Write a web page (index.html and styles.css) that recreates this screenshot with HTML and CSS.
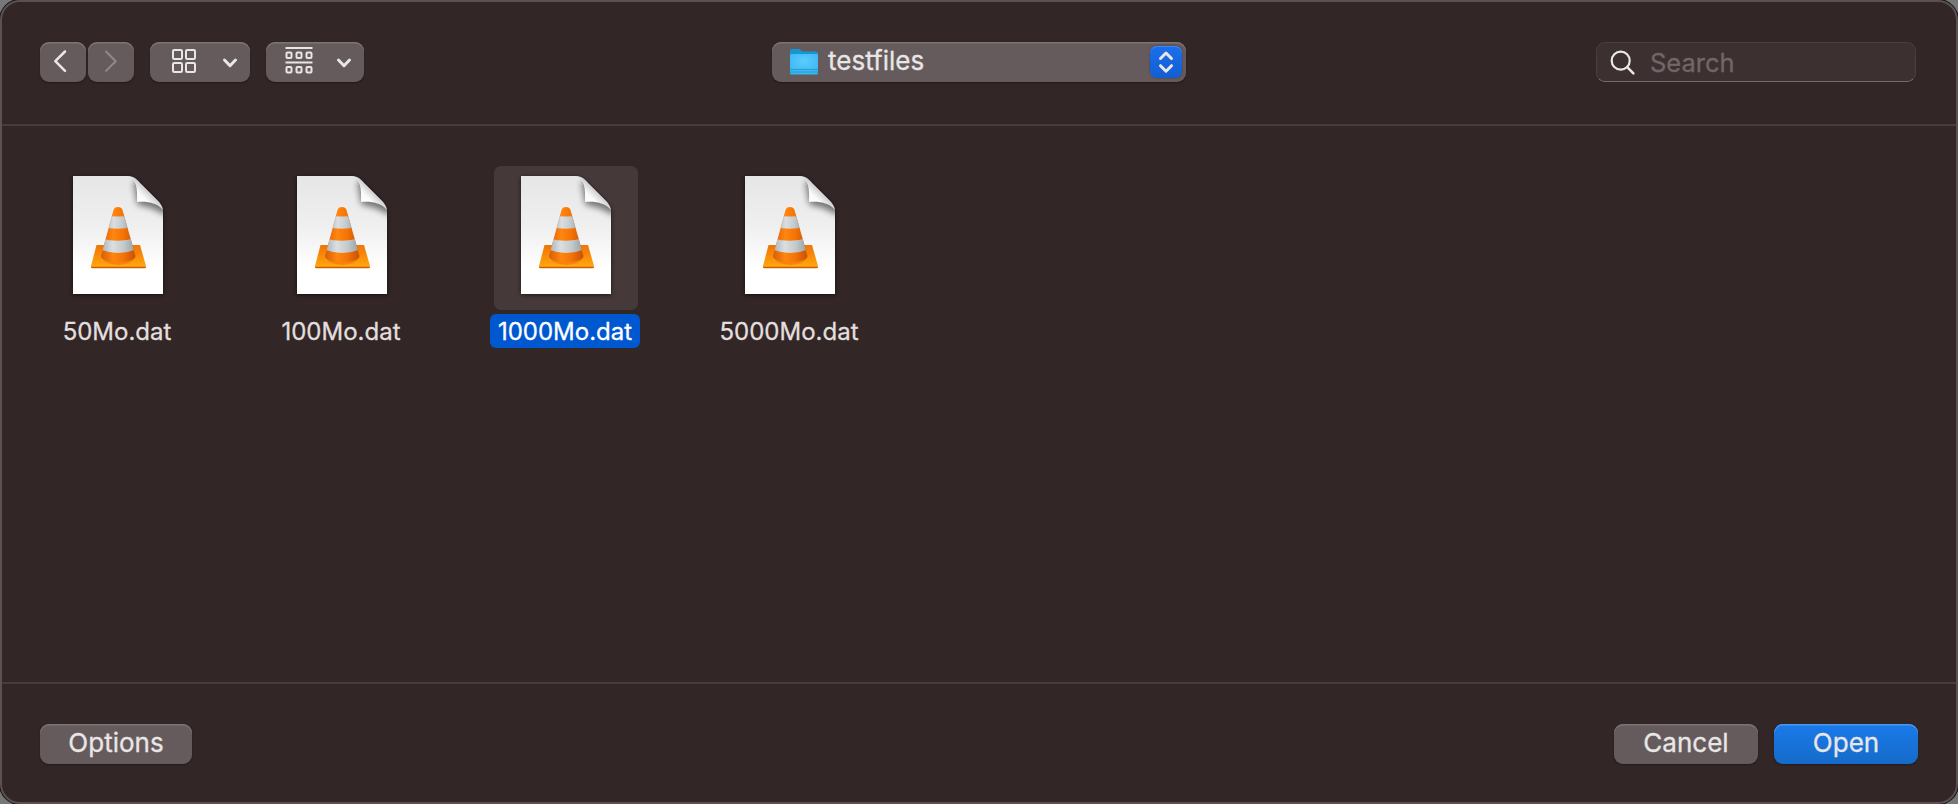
FILE: index.html
```html
<!DOCTYPE html>
<html lang="en">
<head>
<meta charset="utf-8">
<title>Open</title>
<link rel="stylesheet" href="styles.css">
</head>
<body>
<svg class="defs" width="0" height="0" aria-hidden="true">
  <defs>
    <linearGradient id="paper" x1="0" y1="0" x2="0" y2="1">
      <stop offset="0" stop-color="#e6e6e6"/><stop offset=".45" stop-color="#f0f0f0"/><stop offset=".78" stop-color="#fff"/>
    </linearGradient>
    <linearGradient id="curl" gradientUnits="userSpaceOnUse" x1="64" y1="26" x2="75" y2="15">
      <stop offset="0" stop-color="#fff"/><stop offset=".5" stop-color="#fafafa"/><stop offset="1" stop-color="#cfcfcf"/>
    </linearGradient>
    <linearGradient id="orange" x1="0" y1="0" x2="1" y2="0">
      <stop offset="0" stop-color="#d05808"/><stop offset=".38" stop-color="#ff860f"/><stop offset=".65" stop-color="#f47206"/><stop offset="1" stop-color="#c24b06"/>
    </linearGradient>
    <linearGradient id="white" x1="0" y1="0" x2="1" y2="0">
      <stop offset="0" stop-color="#a3a7aa"/><stop offset=".36" stop-color="#dadee1"/><stop offset=".65" stop-color="#c4c9cc"/><stop offset="1" stop-color="#929699"/>
    </linearGradient>
    <linearGradient id="base" x1="0" y1="0" x2="0" y2="1">
      <stop offset="0" stop-color="#f07406"/><stop offset=".6" stop-color="#fc920a"/><stop offset="1" stop-color="#ffae10"/>
    </linearGradient>
    <filter id="soft" x="-40%" y="-40%" width="180%" height="180%"><feGaussianBlur stdDeviation="3"/></filter>
    <clipPath id="sheet"><path d="M0 0H55C61 0 65 4 68 8L86 26Q90 30 90 36V118H0Z"/></clipPath>
    <clipPath id="cone"><path d="M40.500 34Q41.500 31 45 31Q48.500 31 49.500 34L62.500 80C62.500 88 28 88 28 80Z"/></clipPath>
    <symbol id="document" viewBox="0 0 90 118">
      <path d="M0 0H55C61 0 65 4 68 8L86 26Q90 30 90 36V118H0Z" fill="url(#paper)"/>
      <g clip-path="url(#sheet)">
        <path d="M60 8C63 14 62 22 65 29C73 30 83 33 93 40L96 20L70 0Z" fill="#000" opacity=".5" filter="url(#soft)"/>
      </g>
      <path d="M55 0C64 3 64.500 14 64 25.800C75 25 85 27 90 34Q89 30 86 26L68 8Q61 1 55 0Z" fill="url(#curl)"/>
      <path d="M23.500 69H67L73 90Q73 92 71.500 92H19.500Q18 92 18 90Z" fill="url(#base)"/>
      <path d="M18 90.700H73V91Q73 92.300 71.500 92.300H19.500Q18 92.300 18 91Z" fill="#d05a04"/>
      <path d="M30 82C31 91 60 91 61 82Z" fill="#f27b08" opacity=".75"/>
      <g clip-path="url(#cone)">
        <path d="M26 28H64V90H26Z" fill="url(#orange)"/>
        <path d="M30 39.500Q45 41.500 60 39.500V51Q45 54.500 30 51Z" fill="url(#white)"/>
        <path d="M26 61.500Q45 68 64 61.500V73Q45 81 26 73Z" fill="url(#white)"/>
      </g>
    </symbol>
    <symbol id="chevron-down" viewBox="0 0 16 12">
      <path d="M2.500 3L8 8.700L13.500 3" class="stroke bold"/>
    </symbol>
  </defs>
</svg>

<main class="dialog">
  <header class="toolbar">
    <div class="tools">
      <div class="history">
        <button class="btn nav" aria-label="Back"><svg width="46" height="40"><path d="M25 9.500L15.300 19.200L25 28.900" class="stroke"/></svg></button>
        <button class="btn nav disabled" aria-label="Forward"><svg width="46" height="40"><path d="M18 9.500L27.700 19.200L18 28.900" class="stroke"/></svg></button>
      </div>
      <button class="btn view" aria-label="Icon view">
        <svg width="24" height="24" class="thin"><rect x="1" y="1" width="9" height="9" rx="1.200"/><rect x="14" y="1" width="9" height="9" rx="1.200"/><rect x="1" y="14" width="9" height="9" rx="1.200"/><rect x="14" y="14" width="9" height="9" rx="1.200"/></svg>
        <svg class="chev" width="16" height="12"><use href="#chevron-down"/></svg>
      </button>
      <button class="btn group" aria-label="Group by">
        <svg width="28" height="28" class="thin"><path d="M.5 2H27.500M.5 16.500H27.500"/><rect x="1.500" y="6.500" width="5" height="5.500" rx="1"/><rect x="11.500" y="6.500" width="5" height="5.500" rx="1"/><rect x="21.500" y="6.500" width="5" height="5.500" rx="1"/><rect x="1.500" y="21" width="5" height="5.500" rx="1"/><rect x="11.500" y="21" width="5" height="5.500" rx="1"/><rect x="21.500" y="21" width="5" height="5.500" rx="1"/></svg>
        <svg class="chev" width="16" height="12"><use href="#chevron-down"/></svg>
      </button>
    </div>

    <button class="btn location">
      <svg class="folder" width="30" height="28">
        <defs><radialGradient id="folderFront" cy=".35" r=".7"><stop offset="0" stop-color="#5dccff"/><stop offset="1" stop-color="#39b5ef"/></radialGradient></defs>
        <path d="M1 3Q1 1 3 1H9.500Q11 1 12 2.200Q13 3.500 14.500 3.500H27Q29 3.500 29 5.500V25H1Z" fill="#1597d5"/>
        <path d="M1 7Q1 6 2 6H28Q29 6 29 7V25Q29 26.500 27.500 26.500H2.500Q1 26.500 1 25Z" fill="url(#folderFront)"/>
        <path d="M1 21.500H29M1 24H29" stroke="#219bd6" stroke-width="1"/>
      </svg>
      <span class="location-name">testfiles</span>
      <span class="stepper"><svg width="32" height="32"><path d="M10.500 12.500L16 7L21.500 12.500M10.500 19.700L16 25.200L21.500 19.700" class="stroke bold"/></svg></span>
    </button>

    <label class="search">
      <svg width="26" height="26"><circle cx="10.700" cy="10.700" r="9" class="stroke fine"/><path d="M17.200 17.200L23.400 23.300" class="stroke"/></svg>
      <span class="placeholder">Search</span>
    </label>
  </header>

  <section class="files">
    <div class="file"><div class="thumb"><svg class="doc"><use href="#document"/></svg></div><span class="name">50Mo.dat</span></div>
    <div class="file"><div class="thumb"><svg class="doc"><use href="#document"/></svg></div><span class="name">100Mo.dat</span></div>
    <div class="file selected"><div class="thumb"><svg class="doc"><use href="#document"/></svg></div><span class="name">1000Mo.dat</span></div>
    <div class="file"><div class="thumb"><svg class="doc"><use href="#document"/></svg></div><span class="name">5000Mo.dat</span></div>
  </section>

  <footer class="footer">
    <button class="btn options">Options</button>
    <div class="actions">
      <button class="btn action">Cancel</button>
      <button class="btn action primary">Open</button>
    </div>
  </footer>
</main>
</body>
</html>
```
FILE: styles.css
```css
* { box-sizing: border-box; }
body {
  margin: 0;
  background: #777;
  font-family: Inter, "Liberation Sans", sans-serif;
  color: #e6e2e2;
  -webkit-text-stroke: .3px;
}
.defs { position: absolute; }
.dialog {
  width: 1958px;
  height: 804px;
  display: flex;
  flex-direction: column;
  background: #332626;
  border: 2px solid #5c5051;
  border-radius: 20px;
  box-shadow: 0 0 0 1px #111;
  overflow: hidden;
}
.toolbar {
  height: 124px;
  padding: 40px 40px 0 38px;
  display: grid;
  grid-template-columns: 732px 414px 1fr;
  align-items: start;
  border-bottom: 2px solid #473b3b;
}
.tools { display: flex; gap: 16px; }
.history { display: flex; gap: 2px; }
.btn {
  height: 40px;
  padding: 0;
  border: 0;
  border-radius: 9px;
  background: #655b5c;
  color: #e9e6e6;
  font: 26px/38px Inter, "Liberation Sans", sans-serif;
  box-shadow: inset 0 1.500px 0 #7d7475, 0 1px 2px rgba(0, 0, 0, .35);
}
.btn svg { display: block; }
.stroke {
  fill: none;
  stroke: #e9e6e6;
  stroke-width: 2.500;
  stroke-linecap: round;
  stroke-linejoin: round;
}
.bold { stroke-width: 3; }
.fine { stroke-width: 2.200; }
.thin { fill: none; stroke: #e9e6e6; stroke-width: 2; }
.nav { width: 46px; }
.disabled .stroke { stroke: #918889; stroke-width: 2; }
.view { width: 100px; display: flex; padding: 7px 0 0 22px; }
.view .chev { margin: 8px 0 0 26px; }
.group { width: 98px; display: flex; padding: 4px 0 0 18.500px; }
.group .chev { margin: 11px 0 0 23.500px; }
.location {
  display: flex;
  align-items: flex-start;
  padding: 4px 4px 4px 17px;
  text-align: left;
}
.folder { margin-top: 2px; }
.location-name {
  flex: 1;
  margin-left: 9px;
  line-height: 32px;
  margin-top: -1px;
}
.stepper {
  width: 32px;
  height: 32px;
  border-radius: 7px;
  background: linear-gradient(#1a6fee, #145dd0);
  box-shadow: 0 0 2px rgba(0, 0, 0, .4), inset 0 1px 0 #4688ef;
}
.search {
  justify-self: end;
  width: 320px;
  height: 40px;
  display: flex;
  padding: 7px 0 0 13px;
  border: 1px solid #4b3f40;
  border-bottom-color: #766c6d;
  border-radius: 9px;
  background: #3d3031;
}
.placeholder {
  margin-left: 14px;
  margin-top: -3px;
  font-size: 25.500px;
  line-height: 32px;
  color: #716769;
}
.files {
  flex: 1;
  display: flex;
  align-items: flex-start;
  padding: 40px 0 0 4px;
}
.file {
  width: 224px;
  display: flex;
  flex-direction: column;
  align-items: center;
}
.thumb {
  width: 144px;
  height: 144px;
  padding: 10px 27px;
  border-radius: 7px;
}
.doc {
  display: block;
  width: 90px;
  height: 118px;
  filter: drop-shadow(0 1px 2px rgba(0, 0, 0, .6));
}
.name {
  height: 34px;
  margin: 4px 2px 0 0;
  padding: 0 7.500px;
  border-radius: 6px;
  font-size: 24px;
  line-height: 35px;
  color: #e2dfdf;
}
.selected .thumb { background: #463939; }
.selected .name { background: #0058d0; color: #fff; }
.footer {
  height: 120px;
  padding: 40px 38px 0;
  display: flex;
  justify-content: space-between;
  align-items: flex-start;
  border-top: 2px solid #473b3b;
}
.options, .action { padding-bottom: 2px; line-height: 36px; }
.options { width: 152px; }
.actions { display: flex; gap: 16px; }
.action { width: 144px; }
.primary {
  background: linear-gradient(#1a7aea, #156bc9);
  box-shadow: inset 0 1.500px 0 #4a97f0, 0 1px 2px rgba(0, 0, 0, .35);
}
```
